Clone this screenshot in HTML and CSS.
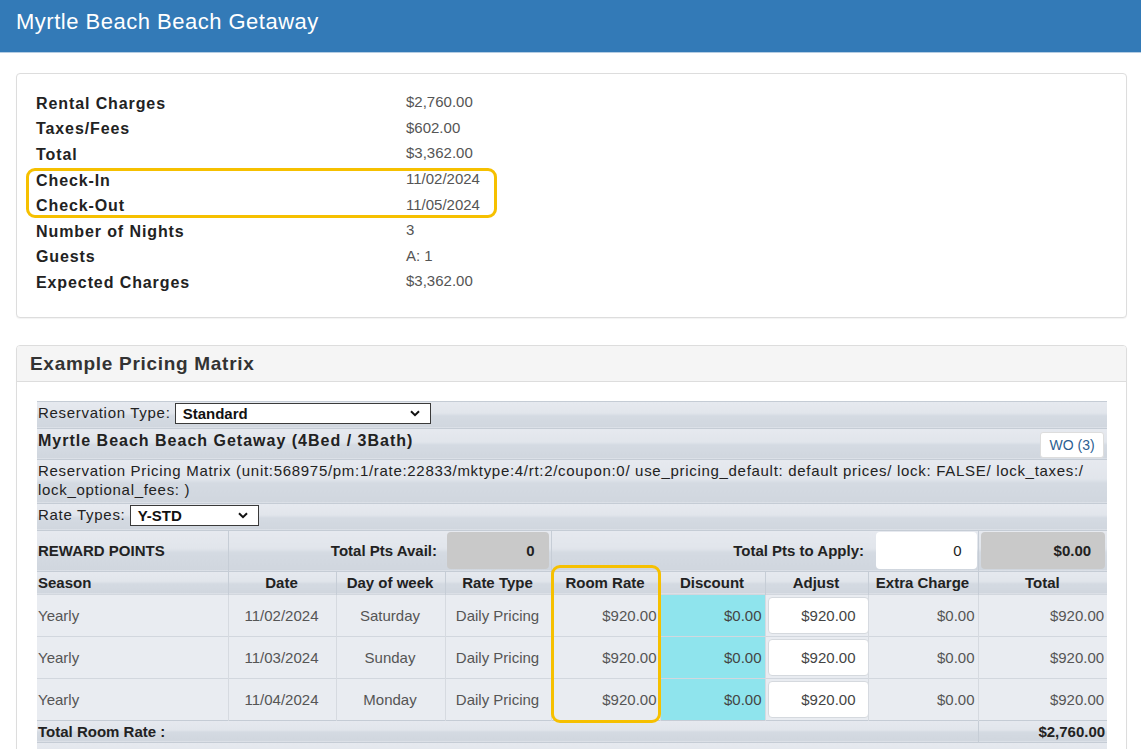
FILE: index.html
```html
<!DOCTYPE html>
<html lang="en">
<head>
<meta charset="utf-8">
<title>Myrtle Beach Beach Getaway</title>
<link rel="stylesheet" href="styles.css">
</head>
<body>
<header class="topbar"><h1>Myrtle Beach Beach Getaway</h1></header>
<main class="content">
  <section class="panel summary">
    <div class="summary-grid">
      <div class="lbl">Rental Charges</div><div class="val">$2,760.00</div>
      <div class="lbl">Taxes/Fees</div><div class="val">$602.00</div>
      <div class="lbl">Total</div><div class="val">$3,362.00</div>
      <div class="lbl">Check-In</div><div class="val">11/02/2024</div>
      <div class="lbl">Check-Out</div><div class="val">11/05/2024</div>
      <div class="lbl">Number of Nights</div><div class="val">3</div>
      <div class="lbl">Guests</div><div class="val">A: 1</div>
      <div class="lbl">Expected Charges</div><div class="val">$3,362.00</div>
    </div>
    <div class="hl hl-dates"></div>
  </section>

  <section class="panel matrix">
    <div class="panel-head">Example Pricing Matrix</div>
    <div class="panel-body">
      <div class="table-wrap">
        <table class="pm">
          <colgroup>
            <col class="c1"><col class="c2"><col class="c3"><col class="c4"><col class="c5"><col class="c6"><col class="c7"><col class="c8"><col class="c9">
          </colgroup>
          <tr class="g r-type">
            <td colspan="9"><span class="wide">Reservation Type:</span> <span class="sel sel-wide">Standard<svg class="chev" viewBox="0 0 10 7" width="10" height="7"><path d="M1 1.2 L5 5.2 L9 1.2" fill="none" stroke="#111" stroke-width="2"/></svg></span></td>
          </tr>
          <tr class="g r-title">
            <td colspan="9"><div class="title-line"><span class="unit-title">Myrtle Beach Beach Getaway (4Bed / 3Bath)</span><span class="wo">WO (3)</span></div></td>
          </tr>
          <tr class="g r-info">
            <td colspan="9" class="wide">Reservation Pricing Matrix (unit:568975/pm:1/rate:22833/mktype:4/rt:2/coupon:0/ use_pricing_default: default prices/ lock: FALSE/ lock_taxes:/ lock_optional_fees: )</td>
          </tr>
          <tr class="g r-type">
            <td colspan="9"><span class="wide">Rate Types:</span> <span class="sel sel-rate">Y-STD<svg class="chev" viewBox="0 0 10 7" width="10" height="7"><path d="M1 1.2 L5 5.2 L9 1.2" fill="none" stroke="#111" stroke-width="2"/></svg></span></td>
          </tr>
          <tr class="g r-reward">
            <td class="b">REWARD POINTS</td>
            <td colspan="2" class="b right dv pad-avail">Total Pts Avail:</td>
            <td class="boxcell"><div class="pts">0</div></td>
            <td colspan="3" class="b right dv pad-apply">Total Pts to Apply:</td>
            <td class="incell"><div class="ptsin">0</div></td>
            <td class="boxcell dv"><div class="pts pts-total">$0.00</div></td>
          </tr>
          <tr class="g r-head">
            <td class="b">Season</td>
            <td class="b center dv">Date</td>
            <td class="b center dv">Day of week</td>
            <td class="b center dv">Rate Type</td>
            <td class="b center dv">Room Rate</td>
            <td class="b center dv">Discount</td>
            <td class="b center dv">Adjust</td>
            <td class="b center dv">Extra Charge</td>
            <td class="b center dv">Total</td>
          </tr>
          <tr class="r-data">
            <td>Yearly</td><td class="center">11/02/2024</td><td class="center">Saturday</td><td class="center">Daily Pricing</td><td class="right">$920.00</td><td class="right disc">$0.00</td><td class="adj"><div class="adjin">$920.00</div></td><td class="right">$0.00</td><td class="right">$920.00</td>
          </tr>
          <tr class="r-data">
            <td>Yearly</td><td class="center">11/03/2024</td><td class="center">Sunday</td><td class="center">Daily Pricing</td><td class="right">$920.00</td><td class="right disc">$0.00</td><td class="adj"><div class="adjin">$920.00</div></td><td class="right">$0.00</td><td class="right">$920.00</td>
          </tr>
          <tr class="r-data">
            <td>Yearly</td><td class="center">11/04/2024</td><td class="center">Monday</td><td class="center">Daily Pricing</td><td class="right">$920.00</td><td class="right disc">$0.00</td><td class="adj"><div class="adjin">$920.00</div></td><td class="right">$0.00</td><td class="right">$920.00</td>
          </tr>
          <tr class="g r-total">
            <td colspan="8" class="b">Total Room Rate :</td>
            <td class="b right dv">$2,760.00</td>
          </tr>
          <tr class="g r-end"><td colspan="9"></td></tr>
        </table>
        <div class="hl hl-rate"></div>
      </div>
    </div>
  </section>
</main>
</body>
</html>
```

FILE: styles.css
```css
* { box-sizing: border-box; }

body {
  margin: 0;
  font-family: "Liberation Sans", Arial, Helvetica, sans-serif;
  background: #fff;
  color: #222;
}

.topbar {
  background: #337ab7;
  height: 53px;
  border-bottom: 1px solid #b5cde3;
}
.topbar h1 {
  margin: 0;
  padding-left: 16px;
  font-size: 22px;
  font-weight: normal;
  letter-spacing: 0.5px;
  line-height: 44px;
  color: #fff;
}

.content { padding: 20px 14px 0 16px; }

.panel {
  border: 1px solid #ddd;
  border-radius: 4px;
  background: #fff;
  box-shadow: 0 1px 1px rgba(0, 0, 0, 0.05);
}

.summary {
  position: relative;
  padding: 17px 20px 21px 19px;
}
.summary-grid {
  display: grid;
  grid-template-columns: 370px 1fr;
  grid-auto-rows: 25.6px;
  align-items: center;
}
.lbl { font-weight: bold; font-size: 16px; letter-spacing: 0.9px; color: #222; }
.val { font-size: 15px; color: #555; margin-top: -4px; }

.hl {
  position: absolute;
  border: 3px solid #f6c000;
  border-radius: 9px;
  pointer-events: none;
}
.hl-dates { left: 9px; top: 94px; width: 471px; height: 50px; }
.hl-rate { left: 514px; top: 164px; width: 110px; height: 158px; }

.matrix { margin-top: 27px; }
.panel-head {
  background: #f5f5f5;
  border-bottom: 1px solid #ddd;
  border-radius: 3px 3px 0 0;
  height: 36px;
  line-height: 35px;
  padding-left: 13px;
  font-size: 19px;
  letter-spacing: 0.7px;
  font-weight: bold;
  color: #333;
}
.panel-body { padding: 19px 19px 0 20px; }

.table-wrap { position: relative; width: 1070px; }

.pm {
  width: 1070px;
  border-collapse: collapse;
  table-layout: fixed;
  font-size: 15px;
  color: #222;
}
.pm .c1 { width: 191px; }
.pm .c2 { width: 108px; }
.pm .c3 { width: 109px; }
.pm .c4 { width: 106px; }
.pm .c5 { width: 109px; }
.pm .c6 { width: 105px; }
.pm .c7 { width: 103px; }
.pm .c8 { width: 110px; }
.pm .c9 { width: 129px; }

.pm td {
  padding: 0 2px 0 1px;
  border-top: 1px solid #c5ccd5;
  white-space: nowrap;
}
.g td {
  background: linear-gradient(#e6e9ef 0%, #e1e5eb 45%, #d4dae2 55%, #d0d6de 100%);
}
.pm td.dv { border-left: 1px solid #c6cdd6; }
.pm td.b { font-weight: bold; }
.pm td.right { text-align: right; }
.pm td.center { text-align: center; }
.wide { letter-spacing: 0.7px; }

.r-type td { height: 27px; }
.r-title td { height: 31px; padding: 2px 3px 1px 1px; vertical-align: top; }
.r-info td { height: 44px; white-space: normal; line-height: 19px; padding: 1px 4px 4px 1px; }
.r-reward td { height: 41px; }
.r-head td { height: 23px; }
.r-total td { height: 22px; }
.r-end td { height: 12px; background: linear-gradient(#e6e9ef, #e1e5eb); }

.sel {
  display: inline-flex;
  align-items: center;
  justify-content: space-between;
  height: 21px;
  border: 1px solid #3a3a3a;
  background: #fff;
  padding: 0 10px 0 7px;
  font-weight: bold;
  color: #111;
  vertical-align: middle;
  position: relative;
  top: -1px;
}
.sel-wide { width: 256px; }
.sel-rate { width: 129px; }
.chev { display: block; }

.title-line {
  display: flex;
  justify-content: space-between;
  align-items: flex-start;
}
.unit-title { font-size: 16px; font-weight: bold; letter-spacing: 1px; line-height: 20px; }
.wo {
  margin-top: 1px;
  width: 64px;
  height: 26px;
  line-height: 24px;
  text-align: center;
  background: #fff;
  border: 1px solid #ddd;
  border-radius: 3px;
  color: #2c5f92;
  font-size: 14px;
}

.pad-avail { padding-right: 8px !important; }
.pad-apply { padding-right: 4px !important; }
.pm td.boxcell { padding: 0 2px; }
.pts {
  height: 37px;
  background: #c9c9c9;
  border-radius: 4px;
  display: flex;
  align-items: center;
  justify-content: flex-end;
  padding-right: 14px;
  font-weight: bold;
}
.pts-total { padding-right: 14px; }
.pm td.incell { padding: 0 1px 0 8px; }
.ptsin {
  height: 37px;
  background: #fff;
  border-radius: 4px;
  display: flex;
  align-items: center;
  justify-content: flex-end;
  padding-right: 15px;
}

.r-data td {
  height: 42px;
  background: #e9ecf1;
  color: #555;
  border-top: 1px solid #d2d7de;
  border-left: 1px solid #d6dae0;
}
.r-data td:first-child { border-left: none; }
.pm .r-data td.right { padding-right: 3px; }
.pm .r-data td.disc { background: #8fe4ed; color: #444; }
.pm .r-data td.adj { padding: 0 0 0 2px; }
.adjin {
  height: 37px;
  width: 101px;
  background: #fff;
  border: 1px solid #d5d9de;
  border-radius: 4px;
  display: flex;
  align-items: center;
  justify-content: flex-end;
  padding-right: 12px;
  color: #444;
}
```
